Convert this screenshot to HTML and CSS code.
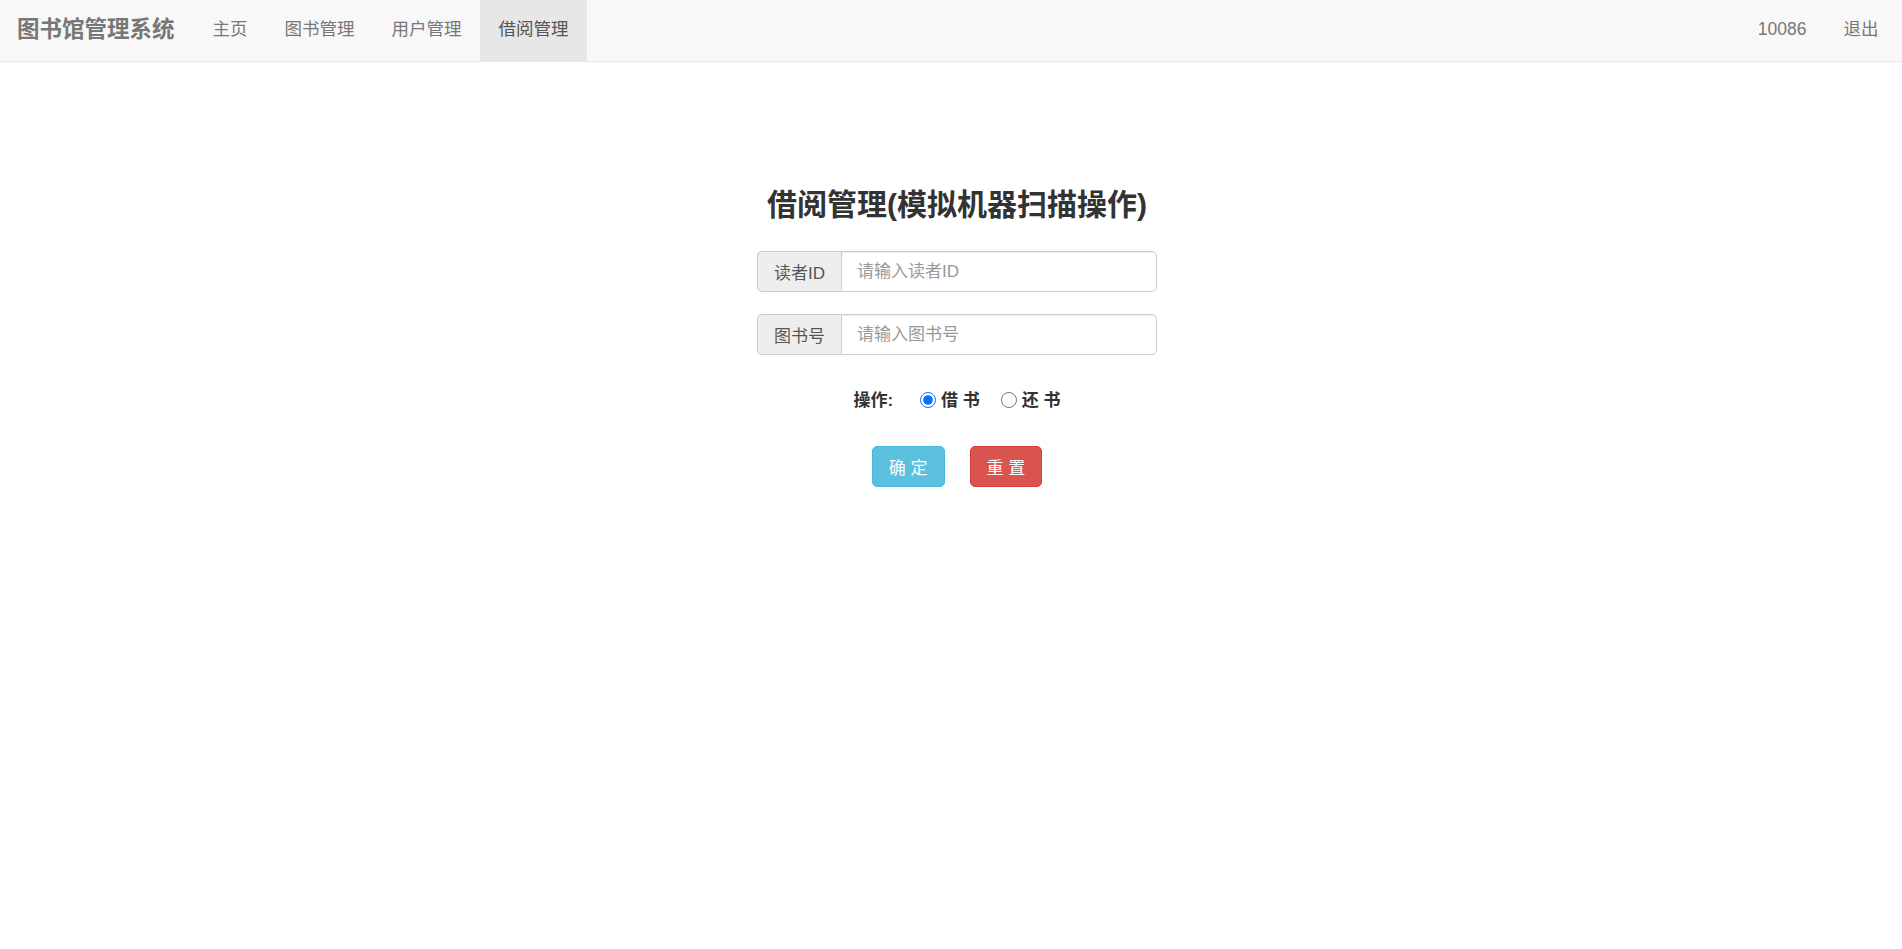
FILE: index.html
```html
<!DOCTYPE html>
<html lang="zh-CN">
<head>
<meta charset="utf-8">
<title>借阅管理</title>
<link rel="stylesheet" href="styles.css">
</head>
<body>
<nav class="navbar">
  <a class="brand" href="#">图书馆管理系统</a>
  <ul class="nav">
    <li><a href="#">主页</a></li>
    <li><a href="#">图书管理</a></li>
    <li><a href="#">用户管理</a></li>
    <li class="active"><a href="#">借阅管理</a></li>
  </ul>
  <ul class="nav nav-right">
    <li><a href="#">10086</a></li>
    <li><a href="#">退出</a></li>
  </ul>
</nav>
<main class="main">
  <h2 class="title">借阅管理(模拟机器扫描操作)</h2>
  <form class="form">
    <div class="input-group">
      <span class="addon">读者ID</span>
      <input class="control" type="text" placeholder="请输入读者ID">
    </div>
    <div class="input-group">
      <span class="addon">图书号</span>
      <input class="control" type="text" placeholder="请输入图书号">
    </div>
    <div class="op-row">
      <span class="op-label">操作:</span>
      <label class="radio"><input type="radio" name="op" checked>借 书</label>
      <label class="radio"><input type="radio" name="op">还 书</label>
    </div>
    <div class="btn-row">
      <button type="button" class="btn btn-info">确 定</button>
      <button type="reset" class="btn btn-danger">重 置</button>
    </div>
  </form>
</main>
</body>
</html>
```

FILE: styles.css
```css
* { box-sizing: border-box; }
html, body { margin: 0; padding: 0; background: #fff; }
body {
  font-family: "Liberation Sans", "Noto Sans CJK SC", sans-serif;
  color: #333;
  font-size: 17px;
}
a { text-decoration: none; }

.navbar {
  display: flex;
  height: 62px;
  background: #f8f8f8;
  border-bottom: 1px solid #e7e7e7;
}
.brand {
  display: block;
  padding: 0 19.5px 2px 17px;
  line-height: 59px;
  font-size: 22.5px;
  font-weight: bold;
  color: #777;
}
.nav {
  display: flex;
  list-style: none;
  margin: 0;
  padding: 0;
}
.nav li a {
  display: block;
  padding: 0 18.5px 2px;
  line-height: 59px;
  height: 61px;
  font-size: 17.5px;
  color: #777;
}
.nav li.active a {
  background: #e7e7e7;
  color: #555;
}
.nav-right {
  margin-left: auto;
  padding-right: 5px;
}

.main {
  padding-left: 12px;
  display: flex;
  flex-direction: column;
  align-items: center;
}
.title {
  margin: 125px 0 0;
  font-size: 30px;
  line-height: 36px;
  font-weight: bold;
  color: #333;
}
.form {
  margin-top: 28px;
  width: 400px;
  display: flex;
  flex-direction: column;
}
.input-group {
  display: flex;
  height: 41px;
  margin-bottom: 22px;
}
.addon {
  flex: 0 0 84px;
  display: flex;
  align-items: center;
  justify-content: center;
  background: #eee;
  border: 1px solid #ccc;
  border-right: 0;
  border-radius: 5px 0 0 5px;
  color: #555;
  font-size: 17px;
}
.control {
  flex: 1;
  min-width: 0;
  height: 41px;
  border: 1px solid #ccc;
  border-radius: 0 5px 5px 0;
  padding: 0 15px;
  font-family: inherit;
  font-size: 17px;
  color: #555;
  box-shadow: inset 0 1px 1px rgba(0,0,0,.075);
  outline: none;
}
.control::placeholder { color: #999; }

.op-row {
  margin-top: 12px;
  display: flex;
  justify-content: center;
  align-items: center;
  height: 24px;
  line-height: 24px;
  font-weight: bold;
  font-size: 17px;
  color: #333;
}
.op-label { margin-right: 27px; }
.radio {
  display: inline-flex;
  align-items: center;
  gap: 5px;
}
.radio + .radio { margin-left: 21px; }
.radio input {
  margin: 0 0 2px;
  width: 16px;
  height: 16px;
}

.btn-row {
  margin-top: 33px;
  display: flex;
  justify-content: center;
  gap: 25px;
}
.btn {
  height: 41px;
  padding: 0 16px;
  font-family: inherit;
  font-size: 17px;
  color: #fff;
  border: 1px solid transparent;
  border-radius: 5px;
  cursor: pointer;
}
.btn-info { background: #5bc0de; border-color: #46b8da; }
.btn-danger { background: #d9534f; border-color: #d43f3a; }
```
